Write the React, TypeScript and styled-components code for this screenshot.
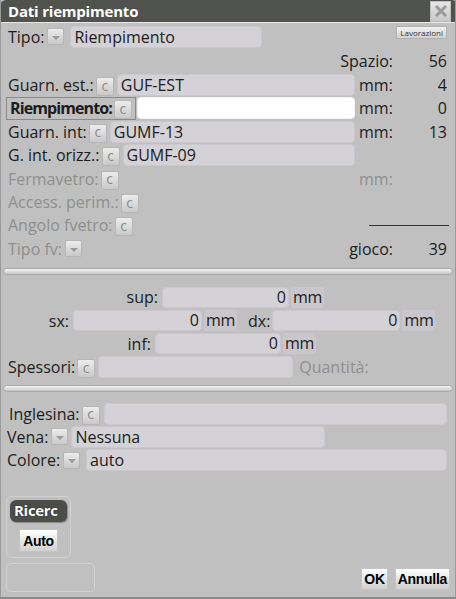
import React from 'react';
import styled, { createGlobalStyle } from 'styled-components';

const Global = createGlobalStyle`
  html, body {
    margin: 0;
    padding: 0;
    background: #c0c0c0;
  }
  body {
    font-family: "Open Sans", "Noto Sans", sans-serif;
    font-size: 16px;
    color: #1c1c1c;
  }
`;

type Side = { unit?: string; value?: string };

const App: React.FC = () => {
  return (
    <Window>
      <Global />
      <TitleBar>
        <Title>Dati riempimento</Title>
        <CloseBtn>
          <svg width="14" height="14" viewBox="0 0 14 14">
            <path d="M2 2 L12 12 M12 2 L2 12" stroke="#9a9a9a" strokeWidth="3" />
          </svg>
        </CloseBtn>
      </TitleBar>

      <Body>
        <Row>
          <Left>
            <Label>Tipo:</Label>
            <DropBtn />
            <Field $w={192}>Riempimento</Field>
          </Left>
          <SmallBtn>Lavorazioni</SmallBtn>
        </Row>

        <Row $h={25}>
          <Left />
          <Unit $wide>Spazio:</Unit>
          <Value>56</Value>
        </Row>

        <FieldRow label="Guarn. est.:" text="GUF-EST" unit="mm:" value="4" />
        <Row>
          <Left>
            <Focus>
              <Label $bold>Riempimento:</Label>
              <CBtn>c</CBtn>
            </Focus>
            <Field $white $grow $ml={1} />
          </Left>
          <Unit>mm:</Unit>
          <Value>0</Value>
        </Row>
        <FieldRow label="Guarn. int:" text="GUMF-13" unit="mm:" value="13" />
        <FieldRow label="G. int. orizz.:" text="GUMF-09" />
        <Row>
          <Left>
            <Label $dim>Fermavetro:</Label>
            <CBtn>c</CBtn>
          </Left>
          <Unit $dim>mm:</Unit>
          <Value />
        </Row>
        <Row>
          <Left>
            <Label $dim>Access. perim.:</Label>
            <CBtn>c</CBtn>
          </Left>
        </Row>
        <Row>
          <Left>
            <Label $dim>Angolo fvetro:</Label>
            <CBtn>c</CBtn>
          </Left>
          <Rule />
        </Row>
        <Row>
          <Left>
            <Label $dim>Tipo fv:</Label>
            <DropBtn />
          </Left>
          <Unit $wide>gioco:</Unit>
          <Value>39</Value>
        </Row>

        <Separator $mt={7} />

        <MidSection>
          <MeasureRow $labelW={152}>
            <Label>sup:</Label>
            <NumField $w={127}>0</NumField>
            <MmBox>mm</MmBox>
          </MeasureRow>
          <MeasureRow $labelW={63}>
            <Label>sx:</Label>
            <NumField $w={129}>0</NumField>
            <MmBox>mm</MmBox>
            <Label $ml={11}>dx:</Label>
            <NumField $w={128}>0</NumField>
            <MmBox>mm</MmBox>
          </MeasureRow>
          <MeasureRow $labelW={145}>
            <Label>inf:</Label>
            <NumField $w={126}>0</NumField>
            <MmBox>mm</MmBox>
          </MeasureRow>
          <MeasureRow $labelW={0}>
            <Label $ml={2}>Spessori:</Label>
            <CBtn>c</CBtn>
            <Field $w={195} $ml={3} />
            <Label $dim $ml={6}>Quantità:</Label>
          </MeasureRow>
        </MidSection>

        <Separator $mt={7} />

        <LowSection>
          <Row>
            <Label $ml={3}>Inglesina:</Label>
            <CBtn>c</CBtn>
            <Field $grow $ml={4} />
          </Row>
          <Row>
            <Label $ml={1}>Vena:</Label>
            <DropBtn />
            <Field $w={254} $ml={0}>Nessuna</Field>
          </Row>
          <Row>
            <Label $ml={1}>Colore:</Label>
            <DropBtn />
            <Field $grow $ml={3}>auto</Field>
          </Row>
        </LowSection>

        <Footer>
          <FooterLeft>
            <GroupBox>
              <Pill>Ricerc</Pill>
              <AutoBtn>Auto</AutoBtn>
            </GroupBox>
            <EmptyBox />
          </FooterLeft>
          <Actions>
            <ActBtn>OK</ActBtn>
            <ActBtn>Annulla</ActBtn>
          </Actions>
        </Footer>
      </Body>
    </Window>
  );
};

const FieldRow: React.FC<{ label: string; text: string } & Side> = ({ label, text, unit, value }) => (
  <Row>
    <Left>
      <Label>{label}</Label>
      <CBtn>c</CBtn>
      <Field $grow>{text}</Field>
    </Left>
    {unit && <Unit>{unit}</Unit>}
    {unit && <Value>{value}</Value>}
  </Row>
);

export default App;

const Window = styled.div`
  width: 456px;
  height: 599px;
  box-sizing: border-box;
  display: flex;
  flex-direction: column;
  background: #c0c0c0;
  border-left: 1px solid #9a9a9a;
  border-right: 1px solid #9a9a9a;
  border-bottom: 2px solid #8a8a8a;
  overflow: hidden;
`;

const TitleBar = styled.div`
  height: 22px;
  flex: 0 0 22px;
  margin: 0 -1px;
  background: #50524e;
  border-radius: 6px 4px 0 0;
  display: flex;
  align-items: center;
  justify-content: space-between;
  padding: 0 5px 0 8px;
  border-bottom: 1px solid #e8e8e8;
`;

const Title = styled.span`
  color: #fff;
  font-weight: 700;
  font-size: 15px;
  letter-spacing: -0.2px;
`;

const CloseBtn = styled.div`
  width: 19px;
  height: 19px;
  background: linear-gradient(#e6e6e6, #c8c8c8);
  border: 1px solid #bdbdbd;
  display: flex;
  align-items: center;
  justify-content: center;
`;

const Body = styled.div`
  flex: 1;
  display: flex;
  flex-direction: column;
  padding: 2px 8px 0 5px;
`;

const Row = styled.div<{ $h?: number }>`
  display: flex;
  align-items: center;
  height: ${p => p.$h ?? 23.4}px;
`;

const Left = styled.div`
  width: 349px;
  flex: 0 0 349px;
  display: flex;
  align-items: center;
  height: 100%;
`;

const Label = styled.span<{ $bold?: boolean; $dim?: boolean; $ml?: number }>`
  white-space: nowrap;
  font-weight: ${p => (p.$bold ? 700 : 400)};
  letter-spacing: ${p => (p.$bold ? '-0.9px' : '0')};
  color: ${p => (p.$dim ? '#8f8f8f' : '#1c1c1c')};
  margin-left: ${p => p.$ml ?? 2}px;
  margin-right: 2px;
`;

const Focus = styled.div`
  display: flex;
  align-items: center;
  height: 23px;
  border: 1px solid #8a8a8a;
  padding-right: 3px;
  box-sizing: border-box;
  & > span { margin-left: 3px; }
`;

const btnBase = `
  box-sizing: border-box;
  background: linear-gradient(#ececec, #c9c9c9);
  border: 1px solid #b6b6b6;
  border-radius: 2px;
  display: flex;
  align-items: center;
  justify-content: center;
  flex: 0 0 auto;
`;

const CBtn = styled.div`
  ${btnBase}
  width: 18px;
  height: 19px;
  margin-top: 3px;
  color: #8a8a8a;
  font-size: 14px;
  line-height: 1;
  padding-bottom: 2px;
`;

const DropBtn = styled.div`
  ${btnBase}
  width: 17px;
  height: 17px;
  margin: 0 3px 0 1px;
  &::after {
    content: '';
    border-left: 4px solid transparent;
    border-right: 4px solid transparent;
    border-top: 4px solid #9a9a9a;
    margin-top: 2px;
  }
`;

const Field = styled.div<{ $w?: number; $grow?: boolean; $white?: boolean; $ml?: number }>`
  box-sizing: border-box;
  height: 22px;
  ${p => (p.$grow ? 'flex: 1;' : `width: ${p.$w}px; flex: 0 0 ${p.$w}px;`)}
  margin-left: ${p => p.$ml ?? 3}px;
  background: ${p => (p.$white ? '#ffffff' : '#d4d2d6')};
  border: 1px solid ${p => (p.$white ? '#f4f4f4' : '#cac8cc')};
  border-radius: 4px;
  padding: 0 3px;
  display: flex;
  align-items: center;
  white-space: nowrap;
  overflow: hidden;
`;

const Unit = styled.span<{ $dim?: boolean; $wide?: boolean }>`
  margin-left: ${p => (p.$wide ? -50 : 4)}px;
  width: ${p => (p.$wide ? 88 : 40)}px;
  text-align: ${p => (p.$wide ? 'right' : 'left')};
  color: ${p => (p.$dim ? '#8f8f8f' : '#1c1c1c')};
  white-space: nowrap;
`;

const Value = styled.span`
  flex: 1;
  text-align: right;
`;

const SmallBtn = styled.div`
  margin-left: auto;
  margin-top: -8px;
  height: 13px;
  padding: 0 3px;
  box-sizing: border-box;
  border: 1px solid #b0b0b0;
  background: linear-gradient(#f2f2f2, #d2d2d2);
  font-size: 8px;
  line-height: 11px;
  color: #333;
`;

const Rule = styled.div`
  margin-left: auto;
  width: 80px;
  height: 1px;
  background: #333;
  margin-right: -2px;
`;

const Separator = styled.div<{ $mt: number }>`
  height: 7px;
  margin: ${p => p.$mt}px -6px 0 -3px;
  box-sizing: border-box;
  border-radius: 4px;
  background: linear-gradient(#f3f3f3 0, #e2e2e2 40%, #c6c6c6 100%);
  border: 1px solid #a9a9a9;
`;

const MidSection = styled.div`
  display: flex;
  flex-direction: column;
  padding-top: 12px;
  gap: 1.8px;
`;

const MeasureRow = styled.div<{ $labelW: number }>`
  display: flex;
  align-items: center;
  height: 21.5px;
  & > span:first-child {
    ${p => (p.$labelW ? `width: ${p.$labelW}px; text-align: right; margin: 0 4px 0 0;` : '')}
  }
`;

const NumField = styled.div<{ $w: number }>`
  box-sizing: border-box;
  width: ${p => p.$w}px;
  height: 21px;
  background: #d4d2d6;
  border: 1px solid #cac8cc;
  border-radius: 4px;
  text-align: right;
  padding: 0 2px;
  line-height: 19px;
`;

const MmBox = styled.div`
  box-sizing: border-box;
  height: 21px;
  margin-left: 2px;
  padding: 0 1px;
  border: 1px solid #cac8cc;
  background: #c9c7cb;
  border-radius: 3px;
  line-height: 19px;
  letter-spacing: -0.3px;
`;

const LowSection = styled.div`
  display: flex;
  flex-direction: column;
  padding-top: 10px;
  & > div { height: 23.3px; }
`;

const Footer = styled.div`
  flex: 1;
  display: flex;
  align-items: flex-end;
  justify-content: space-between;
  padding-bottom: 5px;
`;

const FooterLeft = styled.div`
  display: flex;
  flex-direction: column;
  gap: 5px;
`;

const GroupBox = styled.div`
  width: 65px;
  height: 62px;
  box-sizing: border-box;
  border: 1px solid #d2d2d2;
  border-radius: 6px;
  display: flex;
  flex-direction: column;
  align-items: center;
  padding-top: 3px;
  gap: 7px;
`;

const Pill = styled.div`
  width: 57px;
  height: 22px;
  box-sizing: border-box;
  background: #4b4d49;
  border-radius: 6px;
  color: #fff;
  font-weight: 700;
  font-size: 15px;
  letter-spacing: -0.3px;
  padding-left: 4px;
  line-height: 21px;
  text-shadow: 0 0 1px #000;
  box-shadow: 1px 1px 1px #8a8a8a;
`;

const AutoBtn = styled.div`
  width: 39px;
  height: 23px;
  box-sizing: border-box;
  background: linear-gradient(#ffffff, #d0d0d0);
  border: 1px solid #c4c4c4;
  display: flex;
  align-items: center;
  justify-content: center;
  font-family: "Liberation Sans", Arial, sans-serif;
  font-weight: 700;
  font-size: 14px;
  letter-spacing: -0.3px;
  color: #000;
`;

const EmptyBox = styled.div`
  width: 89px;
  height: 29px;
  box-sizing: border-box;
  border: 1px solid #d2d2d2;
  border-radius: 5px;
`;

const Actions = styled.div`
  display: flex;
  gap: 7px;
  margin-bottom: 2px;
  margin-right: -3px;
`;

const ActBtn = styled.div`
  height: 22px;
  box-sizing: border-box;
  padding: 0 2px;
  background: linear-gradient(#ffffff, #cfcfcf);
  border: 1px solid #c4c4c4;
  display: flex;
  align-items: center;
  font-family: "Liberation Sans", Arial, sans-serif;
  font-weight: 700;
  font-size: 14px;
  letter-spacing: -0.3px;
  color: #000;
`;
